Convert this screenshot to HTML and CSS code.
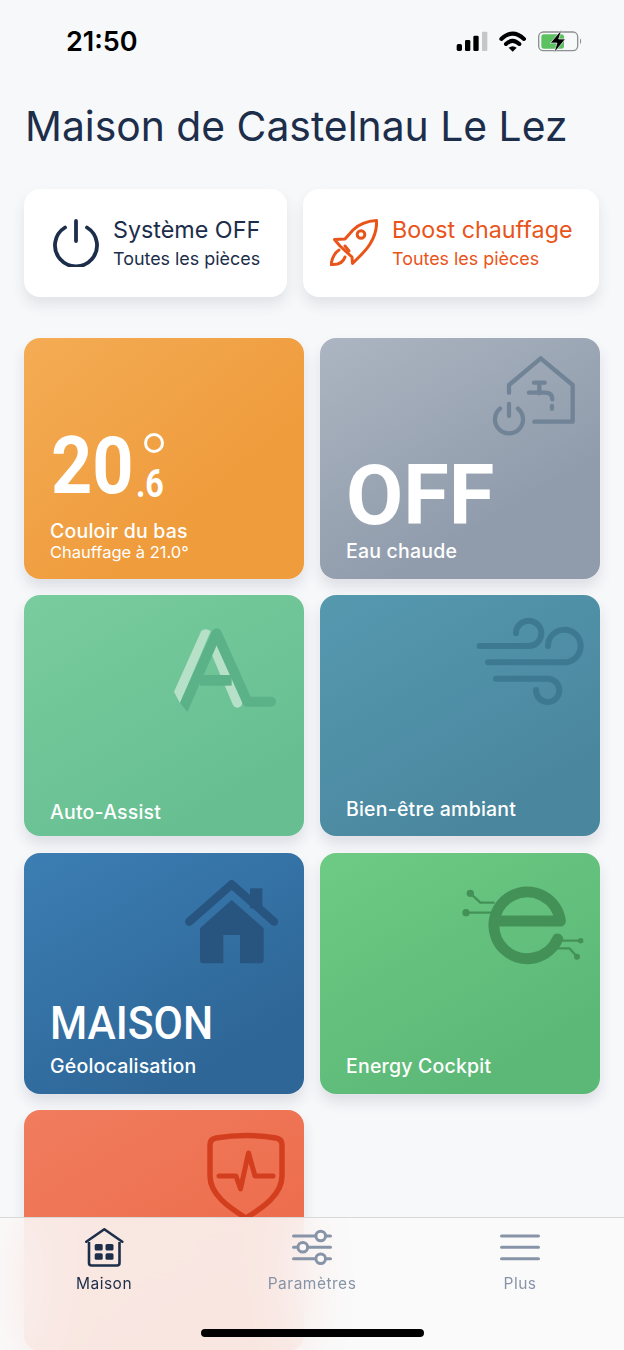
FILE: index.html
```html
<!DOCTYPE html>
<html lang="fr">
<head>
<meta charset="utf-8">
<title>Maison de Castelnau Le Lez</title>
<link rel="stylesheet" href="styles.css">
</head>
<body>
<div class="screen">
  <header class="status">
    <span class="clock">21:50</span>
    <svg class="status-icons" viewBox="0 0 510 150">
      <rect x="80" y="87" width="16" height="21" rx="5" fill="#000"/>
      <rect x="105" y="75" width="16" height="33" rx="4" fill="#000"/>
      <rect x="130" y="62" width="16" height="46" rx="4" fill="#000"/>
      <rect x="156" y="50" width="16" height="58" rx="3" fill="#c4c6c8"/>
      <path d="M214 72Q248 40 282 72" fill="none" stroke="#000" stroke-width="12" stroke-linecap="round"/>
      <path d="M228 87Q248 68 268 87" fill="none" stroke="#000" stroke-width="12" stroke-linecap="round"/>
      <path d="M236 98Q248 89 260 98L248 110Z" fill="#000"/>
      <rect x="326" y="51" width="117" height="56" rx="14" fill="none" stroke="#8d8f91" stroke-width="4"/>
      <rect x="334" y="58" width="68" height="43" rx="8" fill="#5cc160"/>
      <path d="M450 70a6 10 0 0 1 0 18Z" fill="#8d8f91"/>
      <path d="M395 44L361 84H381L372 114L406 72H386Z" fill="#000" stroke="#f7f8fa" stroke-width="2"/>
    </svg>
  </header>

  <h1 class="title">Maison de Castelnau Le Lez</h1>

  <section class="actions">
    <div class="action action-off">
      <svg class="action-icon" viewBox="0 0 48 48">
        <path d="M13 8.5a21 21 0 1 0 22 0" fill="none" stroke="currentColor" stroke-width="3.800" stroke-linecap="round"/>
        <path d="M24 2V22" fill="none" stroke="currentColor" stroke-width="3.800" stroke-linecap="round"/>
      </svg>
      <div class="action-text">
        <span class="action-name">Système OFF</span>
        <span class="action-sub">Toutes les pièces</span>
      </div>
    </div>
    <div class="action action-boost">
      <svg class="action-icon" viewBox="0 0 48 48">
        <g fill="none" stroke="currentColor" stroke-width="3" stroke-linejoin="round" stroke-linecap="round">
          <path d="M46.500 1.500C37 2 29 5 23 11L15 20L4.500 20.500L10 27L22 38L22.500 44.500L30 37C34 33 37 30 40 25C45 17 47 9 46.500 1.500Z"/>
          <circle cx="31" cy="15.500" r="3.800"/>
          <path d="M9 31C4 34 2 40 1 45.500C7 46 13 44 15 38"/>
          <path d="M15 27L19 32"/>
        </g>
      </svg>
      <div class="action-text">
        <span class="action-name">Boost chauffage</span>
        <span class="action-sub">Toutes les pièces</span>
      </div>
    </div>
  </section>

  <main class="tiles">
    <article class="tile tile-orange">
      <div class="temp">
        <span class="temp-int">20</span>
        <span class="temp-side">
          <span class="temp-ring"></span>
          <span class="temp-dec">.6</span>
        </span>
      </div>
      <span class="tile-label">Couloir du bas</span>
      <span class="tile-sub">Chauffage à 21.0°</span>
    </article>

    <article class="tile tile-grey">
      <svg class="tile-icon" viewBox="24 24 840 723">
        <g fill="none" stroke="#718396" stroke-width="13" stroke-linecap="round" stroke-linejoin="round">
          <path d="M591 188V165L686 85L782 165V275H667"/>
          <path d="M666 158H698M682 158V190M651 188H700Q721 188 721 208M720 228V236"/>
          <path d="M564 236A42 42 0 1 0 618 236M591 222V258"/>
        </g>
      </svg>
      <span class="big big-off">OFF</span>
      <span class="tile-label">Eau chaude</span>
    </article>

    <article class="tile tile-mint">
      <svg class="tile-icon" viewBox="72 15 840 723">
        <path d="M604 122Q618 112 632 124L540 340L522 305Z" fill="#b6e0c8"/>
        <path d="M646 180L712 338" fill="none" stroke="#b6e0c8" stroke-width="30" stroke-linecap="round"/>
        <path d="M636 124L540 338L562 366L664 134Z" fill="#5bb188"/>
        <path d="M650 130L742 335H813" fill="none" stroke="#5bb188" stroke-width="30" stroke-linecap="round" stroke-linejoin="round"/>
        <rect x="600" y="255" width="95" height="32" fill="#5bb188"/>
      </svg>
      <span class="tile-label">Auto-Assist</span>
    </article>

    <article class="tile tile-teal">
      <svg class="tile-icon" viewBox="24 15 840 723">
        <g fill="none" stroke="#3d7a92" stroke-width="18" stroke-linecap="round">
          <path d="M503 168H650A38 38 0 1 0 612 130"/>
          <path d="M528 217H758A49 49 0 1 0 708 168"/>
          <path d="M552 266H708A35 35 0 1 1 672 300"/>
        </g>
      </svg>
      <span class="tile-label">Bien-être ambiant</span>
    </article>

    <article class="tile tile-blue">
      <svg class="tile-icon" viewBox="72 9 840 723">
        <g fill="#27557f">
          <rect x="750" y="115" width="37" height="60"/>
          <path d="M600 235L695 150L791 235V330Q791 340 781 340H720V255H670V340H610Q600 340 600 330Z"/>
        </g>
        <path d="M568 215L695 103L822 215" fill="none" stroke="#27557f" stroke-width="25" stroke-linecap="round" stroke-linejoin="round"/>
      </svg>
      <span class="big big-home">MAISON</span>
      <span class="tile-label">Géolocalisation</span>
    </article>

    <article class="tile tile-green">
      <svg class="tile-icon" viewBox="24 9 840 723">
        <g fill="none" stroke="#449158" stroke-linecap="round" stroke-linejoin="round">
          <path d="M548 213H745A100 100 0 1 0 737 267" stroke-width="33"/>
          <path d="M475 130L505 158H545M462 188H535M750 272H806M740 295H772L795 320" stroke-width="7"/>
        </g>
        <g fill="#449158">
          <circle cx="475" cy="130" r="11"/>
          <circle cx="462" cy="188" r="11"/>
          <circle cx="806" cy="272" r="8"/>
          <circle cx="795" cy="320" r="9"/>
        </g>
      </svg>
      <span class="tile-label">Energy Cockpit</span>
    </article>

    <article class="tile tile-red">
      <svg class="tile-icon" viewBox="0 0 280 241">
        <g fill="none" stroke="#d33f1e" stroke-linecap="round" stroke-linejoin="round">
          <path d="M186 35Q186 29 192 28Q222 23 252 28Q258 29 258 35V66C258 84 240 97 222 108C204 97 186 84 186 66Z" stroke-width="5.500"/>
          <path d="M195 66H212L216.500 79L224.500 43L231 66H249" stroke-width="5"/>
        </g>
      </svg>
    </article>
  </main>

  <nav class="tabbar">
    <div class="tab tab-active">
      <svg class="tab-icon" viewBox="0 0 40 40">
        <path d="M2.300 13.700L20.300 1.300L38.300 13.700" fill="none" stroke="currentColor" stroke-width="2.600" stroke-linecap="round" stroke-linejoin="round"/>
        <path d="M5 14V35Q5 37.500 7.500 37.500H33Q35.500 37.500 35.500 35V14" fill="none" stroke="currentColor" stroke-width="2.600"/>
        <rect x="10.700" y="16" width="8" height="6.500" rx="1.500" fill="currentColor"/>
        <rect x="21.500" y="16" width="8" height="6.500" rx="1.500" fill="currentColor"/>
        <rect x="10.700" y="25.300" width="8" height="6.500" rx="1.500" fill="currentColor"/>
        <rect x="21.500" y="25.300" width="8" height="6.500" rx="1.500" fill="currentColor"/>
      </svg>
      <span class="tab-label">Maison</span>
    </div>
    <div class="tab">
      <svg class="tab-icon" viewBox="0 0 40 40">
        <g fill="none" stroke="currentColor" stroke-width="3" stroke-linecap="round">
          <path d="M1.500 8H38.500M1.500 19.300H38.500M1.500 30.700H38.500"/>
        </g>
        <g fill="#fbf8f6" stroke="currentColor" stroke-width="3">
          <circle cx="28.700" cy="8" r="4.800"/>
          <circle cx="10.800" cy="19.300" r="4.800"/>
          <circle cx="28.700" cy="30.700" r="4.800"/>
        </g>
      </svg>
      <span class="tab-label">Paramètres</span>
    </div>
    <div class="tab">
      <svg class="tab-icon" viewBox="0 0 40 40">
        <path d="M1.500 8H38.500M1.500 19.300H38.500M1.500 30.700H38.500" fill="none" stroke="currentColor" stroke-width="3" stroke-linecap="round"/>
      </svg>
      <span class="tab-label">Plus</span>
    </div>
    <span class="home-indicator"></span>
  </nav>
</div>
</body>
</html>
```
FILE: styles.css
```css
* { box-sizing: border-box; }

html, body {
  margin: 0;
  padding: 0;
}

body {
  background: #f7f8fa;
  font-family: "Inter", "Liberation Sans", sans-serif;
}

.screen {
  position: relative;
  width: 624px;
  height: 1350px;
  overflow: hidden;
  background: #f7f8fa;
}

/* status bar */
.status {
  height: 82px;
  display: flex;
  justify-content: space-between;
  align-items: flex-start;
  padding: 15px 24px 0 66px;
}

.clock {
  font-family: "Inter", sans-serif;
  font-weight: 600;
  font-size: 27px;
  line-height: 54px;
  color: #000;
}

.status-icons {
  width: 170px;
  height: 50px;
}

/* title */
.title {
  margin: 0;
  padding-left: 25px;
  height: 90px;
  font-weight: 400;
  font-size: 40.850px;
  line-height: 88px;
  color: #1c2e4a;
  white-space: nowrap;
}

/* action buttons */
.actions {
  margin: 17px 0 0 24px;
  width: 575px;
  display: grid;
  grid-template-columns: 263px 296px;
  column-gap: 16px;
}

.action {
  height: 108px;
  background: #fff;
  border-radius: 16px;
  box-shadow: 0 8px 14px rgba(30, 45, 70, .1);
  display: flex;
  align-items: center;
}

.action-off {
  color: #1c2e4a;
  padding-left: 28px;
  gap: 13px;
}

.action-boost {
  color: #e9541a;
  padding-left: 27px;
  gap: 14px;
}

.action-icon {
  width: 48px;
  height: 48px;
  flex: none;
}

.action-text {
  display: flex;
  flex-direction: column;
  gap: 3px;
  white-space: nowrap;
}

.action-name {
  font-size: 23.300px;
  line-height: 28px;
}

.action-sub {
  font-size: 17.900px;
  line-height: 24px;
}

/* tiles */
.tiles {
  margin: 41px 0 0 24px;
  display: grid;
  grid-template-columns: 280px 280px;
  grid-auto-rows: 241px;
  column-gap: 16px;
  row-gap: 16.300px;
}

.tile {
  position: relative;
  border-radius: 16px;
  padding: 0 0 17px 26px;
  display: flex;
  flex-direction: column;
  justify-content: flex-end;
  color: #fff;
  box-shadow: 0 8px 14px rgba(30, 45, 70, .12), 0 0 0 1px rgba(255, 255, 255, .35);
}

.tile-icon {
  position: absolute;
  top: 0;
  left: 0;
  width: 280px;
  height: 241px;
}

.tile-orange { background: linear-gradient(140deg, #f4ac54, #ef9c3d 65%); }
.tile-grey   { background: linear-gradient(150deg, #acb5c1, #909cac 70%); }
.tile-mint   { background: linear-gradient(150deg, #79cc9e, #67bf91 80%); padding-bottom: 13px; }
.tile-teal   { background: linear-gradient(150deg, #5699af, #4a879f 80%); padding-bottom: 16px; }
.tile-blue   { background: linear-gradient(150deg, #3c7eb3, #2e6697 80%); }
.tile-green  { background: linear-gradient(150deg, #6dcb84, #5cb877 80%); }
.tile-red    { background: linear-gradient(150deg, #f07d5e, #ec6a4a 80%); }

.tile-label {
  font-size: 19.500px;
  line-height: 22px;
  font-weight: 500;
  letter-spacing: .2px;
  white-space: nowrap;
}

.tile-sub {
  font-size: 16.500px;
  line-height: 20px;
  white-space: nowrap;
}

.temp {
  display: flex;
  align-items: flex-end;
  height: 66px;
  margin: 0 0 21px 1px;
}

.temp-int {
  display: block;
  width: 77px;
  font-family: "Roboto", sans-serif;
  font-weight: 700;
  font-size: 80px;
  line-height: 66px;
  transform: scaleX(.9);
  transform-origin: left center;
}

.temp-side {
  display: flex;
  flex-direction: column;
  align-items: flex-end;
  justify-content: space-between;
  width: 36px;
  height: 66px;
}

.temp-ring {
  width: 20px;
  height: 20px;
  border: 3px solid #fff;
  border-radius: 50%;
}

.temp-dec {
  font-family: "Roboto", sans-serif;
  font-weight: 700;
  font-size: 38px;
  line-height: 30px;
  transform: scaleX(.85);
  transform-origin: right center;
}

.big {
  font-family: "Roboto", sans-serif;
  white-space: nowrap;
}

.big-off {
  font-weight: 700;
  font-size: 83px;
  line-height: 70px;
  margin-bottom: 9px;
}

.big-home {
  font-weight: 500;
  font-size: 46px;
  line-height: 46px;
  margin-bottom: 9px;
  transform: scaleX(.925);
  transform-origin: left center;
}

/* tab bar */
.tabbar {
  position: absolute;
  left: 0;
  right: 0;
  bottom: 0;
  height: 133px;
  padding-top: 10px;
  display: grid;
  grid-template-columns: repeat(3, 208px);
  align-items: start;
  background: rgba(250, 250, 250, .86);
  border-top: 1px solid #d8d8d8;
  -webkit-backdrop-filter: blur(30px);
  backdrop-filter: blur(30px);
}

.tab {
  display: flex;
  flex-direction: column;
  align-items: center;
  color: #8794a8;
}

.tab-active { color: #1c2e4a; }

.tab-icon {
  width: 40px;
  height: 40px;
}

.tab-label {
  font-size: 15.500px;
  line-height: 20px;
  margin-top: 6px;
  letter-spacing: .5px;
}

.home-indicator {
  position: absolute;
  left: 201px;
  bottom: 13px;
  width: 223px;
  height: 8px;
  border-radius: 4px;
  background: #000;
}
```
